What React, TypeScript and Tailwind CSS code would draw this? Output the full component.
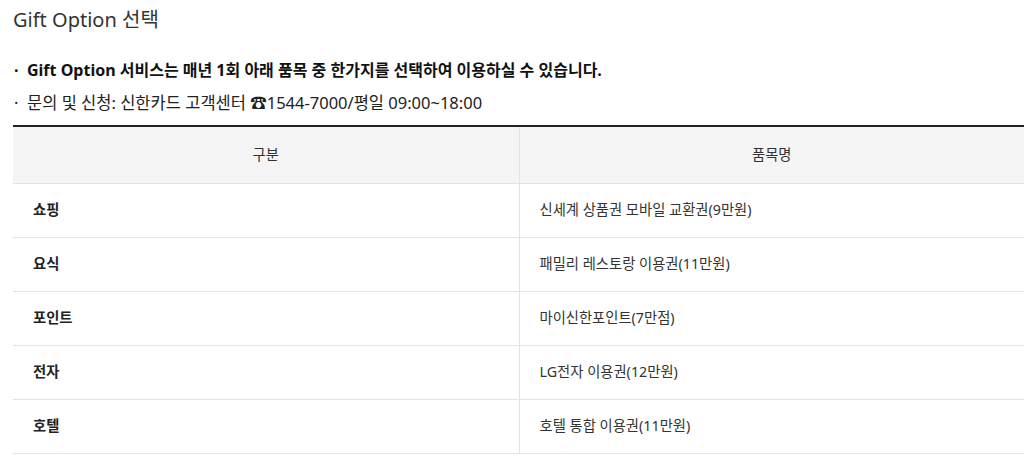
const rows = [
  { category: '쇼핑', item: '신세계 상품권 모바일 교환권(9만원)' },
  { category: '요식', item: '패밀리 레스토랑 이용권(11만원)' },
  { category: '포인트', item: '마이신한포인트(7만점)' },
  { category: '전자', item: 'LG전자 이용권(12만원)' },
  { category: '호텔', item: '호텔 통합 이용권(11만원)' },
];

export default function App() {
  return (
    <div
      className="w-[1024px] h-[456px] overflow-hidden bg-white pl-[13px] text-[#333]"
      style={{ fontFamily: '"Noto Sans", "Noto Sans CJK KR", sans-serif' }}
    >
      <h2 className="pt-[6px] text-[20px] leading-[28px] font-normal text-[#333]">Gift Option 선택</h2>

      <ul className="mt-[19px]">
        <li className="flex h-[34px] items-center text-[16px] font-bold text-[#111]">
          <span className="w-[14px] pl-[1px]">·</span>
          Gift Option 서비스는 매년 1회 아래 품목 중 한가지를 선택하여 이용하실 수 있습니다.
        </li>
        <li className="flex h-[32px] items-center text-[16.5px] text-[#222]">
          <span className="w-[14px] pl-[1px]">·</span>
          문의 및 신청: 신한카드 고객센터 ☎1544-7000/평일 09:00~18:00
        </li>
      </ul>

      <table className="mt-[6px] w-[1011px] border-collapse border-t-2 border-[#222] text-[14.3px]">
        <thead>
          <tr className="h-[57px] bg-[#f5f5f5]">
            <th className="w-[506px] border-b border-r border-[#e3e3e3] font-normal text-[#333]">구분</th>
            <th className="border-b border-[#e3e3e3] font-normal text-[#333]">품목명</th>
          </tr>
        </thead>
        <tbody>
          {rows.map((r) => (
            <tr key={r.category} className="h-[54px]">
              <td className="border-b border-r border-[#e3e3e3] pl-[20px] font-bold text-[#222]">{r.category}</td>
              <td className="border-b border-[#e3e3e3] pl-[20px] text-[#333]">{r.item}</td>
            </tr>
          ))}
        </tbody>
      </table>
    </div>
  );
}
